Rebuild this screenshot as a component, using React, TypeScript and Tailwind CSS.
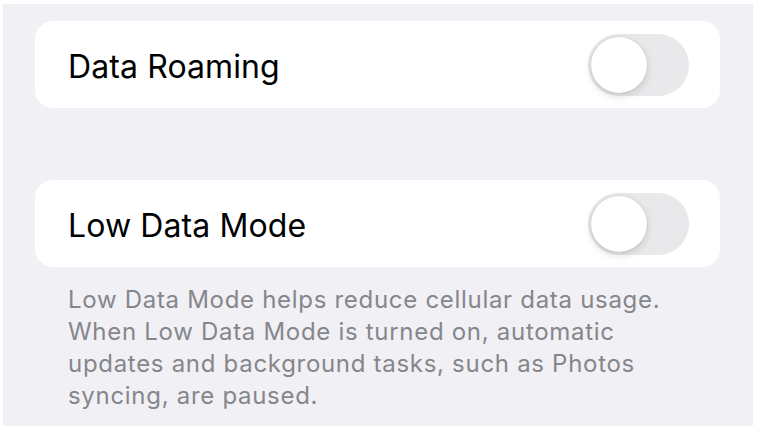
function Toggle() {
  return (
    <div className="w-[101px] h-[62px] rounded-full bg-[#e9e9eb] flex items-center px-[3px]">
      <div className="w-[56px] h-[56px] rounded-full bg-white shadow-[0_3px_8px_rgba(0,0,0,0.15),0_0_0_1px_rgba(0,0,0,0.04)]" />
    </div>
  )
}

function Row({ label }: { label: string }) {
  return (
    <div className="h-[87px] rounded-[18px] bg-white flex items-center justify-between pl-[33px] pr-[31px]">
      <span className="pt-[4px] text-[32px] text-black tracking-[0.1px]">{label}</span>
      <Toggle />
    </div>
  )
}

export default function App() {
  return (
    <div className="w-[759px] h-[433px] bg-white pt-[4px] pl-[3px] pr-[6px] pb-[7px] font-['Inter',sans-serif]">
      <div className="h-full bg-[#f0f0f5] pt-[17px] px-[32px] pr-[33px]">
        <Row label="Data Roaming" />
        <div className="h-[72px]" />
        <Row label="Low Data Mode" />
        <p className="mt-[17px] pl-[33px] text-[24px] leading-[32px] tracking-[0.7px] text-[#86868b] whitespace-nowrap">
          Low Data Mode helps reduce cellular data usage.<br />
          When Low Data Mode is turned on, automatic<br />
          updates and background tasks, such as Photos<br />
          syncing, are paused.
        </p>
      </div>
    </div>
  )
}
